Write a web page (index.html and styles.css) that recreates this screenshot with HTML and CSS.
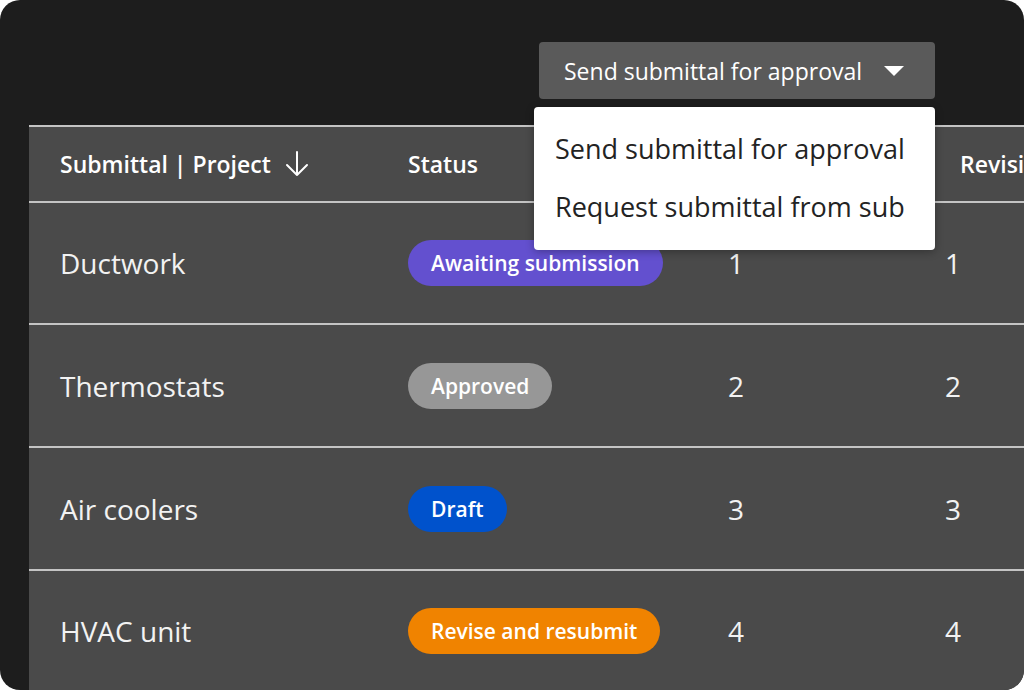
FILE: index.html
```html
<!doctype html>
<html lang="en">

<head>
    <title>Submittals</title>
    <meta charset="UTF-8" />
    <meta name="viewport" content="width=device-width, initial-scale=1" />
    <link rel="stylesheet" href="styles.css">
</head>

<body>
    <div class="frame">
        <div class="toolbar">
            <div class="action">
                <button class="action-btn">
                    <span>Send submittal for approval</span>
                    <svg class="caret" width="22" height="12" viewBox="0 0 22 12">
                        <path d="M1 1 L21 1 L11 11 Z" fill="#fff" />
                    </svg>
                </button>
                <div class="menu">
                    <div class="menu-item">Send submittal for approval</div>
                    <div class="menu-item">Request submittal from sub</div>
                </div>
            </div>
        </div>

        <div class="table">
            <div class="row head">
                <div class="cell">
                    Submittal | Project
                    <svg class="sort" width="24" height="28" viewBox="0 0 24 28">
                        <path d="M12 2 V25 M2 15 L12 25 L22 15" fill="none" stroke="#fff" stroke-width="2" stroke-linecap="round" stroke-linejoin="round" />
                    </svg>
                </div>
                <div class="cell">Status</div>
                <div class="cell">Number</div>
                <div class="cell last">Revision</div>
            </div>

            <div class="row">
                <div class="cell name">Ductwork</div>
                <div class="cell"><span class="badge purple">Awaiting submission</span></div>
                <div class="cell num">1</div>
                <div class="cell num rev">1</div>
            </div>
            <div class="row">
                <div class="cell name">Thermostats</div>
                <div class="cell"><span class="badge grey">Approved</span></div>
                <div class="cell num">2</div>
                <div class="cell num rev">2</div>
            </div>
            <div class="row">
                <div class="cell name">Air coolers</div>
                <div class="cell"><span class="badge blue">Draft</span></div>
                <div class="cell num">3</div>
                <div class="cell num rev">3</div>
            </div>
            <div class="row">
                <div class="cell name">HVAC unit</div>
                <div class="cell"><span class="badge orange">Revise and resubmit</span></div>
                <div class="cell num">4</div>
                <div class="cell num rev">4</div>
            </div>
        </div>
    </div>
</body>

</html>
```

FILE: styles.css
```css
body {
    font-family: "Open Sans", "Lato", sans-serif;
    background: #ffffff;
    width: 100vw;
    height: 100vh;
    margin: 0;
    padding: 0;
    overflow: hidden;
}

.frame {
    height: 690px;
    background: #1d1d1d;
    border-radius: 20px;
    overflow: hidden;
    display: flex;
    flex-direction: column;
}

.toolbar {
    display: flex;
    justify-content: flex-end;
    padding: 42px 89px 0 0;
}

.action {
    position: relative;
}

.action-btn {
    display: flex;
    align-items: center;
    justify-content: space-between;
    height: 57px;
    width: 396px;
    padding: 0 30px 0 25px;
    border: none;
    border-radius: 4px;
    background: #5a5a5a;
    color: #fff;
    font-family: inherit;
    font-size: 23px;
}

.menu {
    position: absolute;
    top: 65px;
    right: 0;
    width: 401px;
    height: 143px;
    box-sizing: border-box;
    padding: 20px 0 0 21px;
    background: #fff;
    border-radius: 4px;
    box-shadow: 0 2px 8px rgba(0, 0, 0, 0.3);
    z-index: 10;
}

.menu-item {
    font-size: 27px;
    color: #232323;
    height: 58px;
    line-height: 44px;
}

.table {
    margin: 26px 0 0 29px;
    background: #4a4a4a;
    border-top: 2px solid #c4c4c4;
    border-bottom-right-radius: 20px;
    flex: 1;
}

.row {
    display: grid;
    grid-template-columns: 348px 320px 222px 1fr;
    height: 120px;
    border-bottom: 2px solid #c4c4c4;
    align-items: center;
}

.row:nth-child(3),
.row:nth-child(4) {
    height: 121px;
}

.row:last-child {
    border-bottom: none;
}

.row.head {
    height: 74px;
}

.cell {
    padding-left: 31px;
    white-space: nowrap;
    display: flex;
    align-items: center;
}

.head .cell {
    font-size: 23px;
    font-weight: 600;
    color: #fff;
}

.head .cell.last {
    padding-left: 41px;
}

.sort {
    margin-left: 14px;
}

.name {
    font-size: 28px;
    color: #f2f2f2;
}

.num {
    font-size: 28px;
    color: #f2f2f2;
}

.num.rev {
    padding-left: 26px;
}

.badge {
    display: inline-block;
    height: 46px;
    line-height: 46px;
    padding: 0 23px;
    border-radius: 23px;
    font-size: 21px;
    font-weight: 600;
    color: #fff;
}

.purple {
    background: #6350cf;
}

.grey {
    background: #979797;
}

.blue {
    background: #0052cc;
}

.orange {
    background: #f08300;
}
```
